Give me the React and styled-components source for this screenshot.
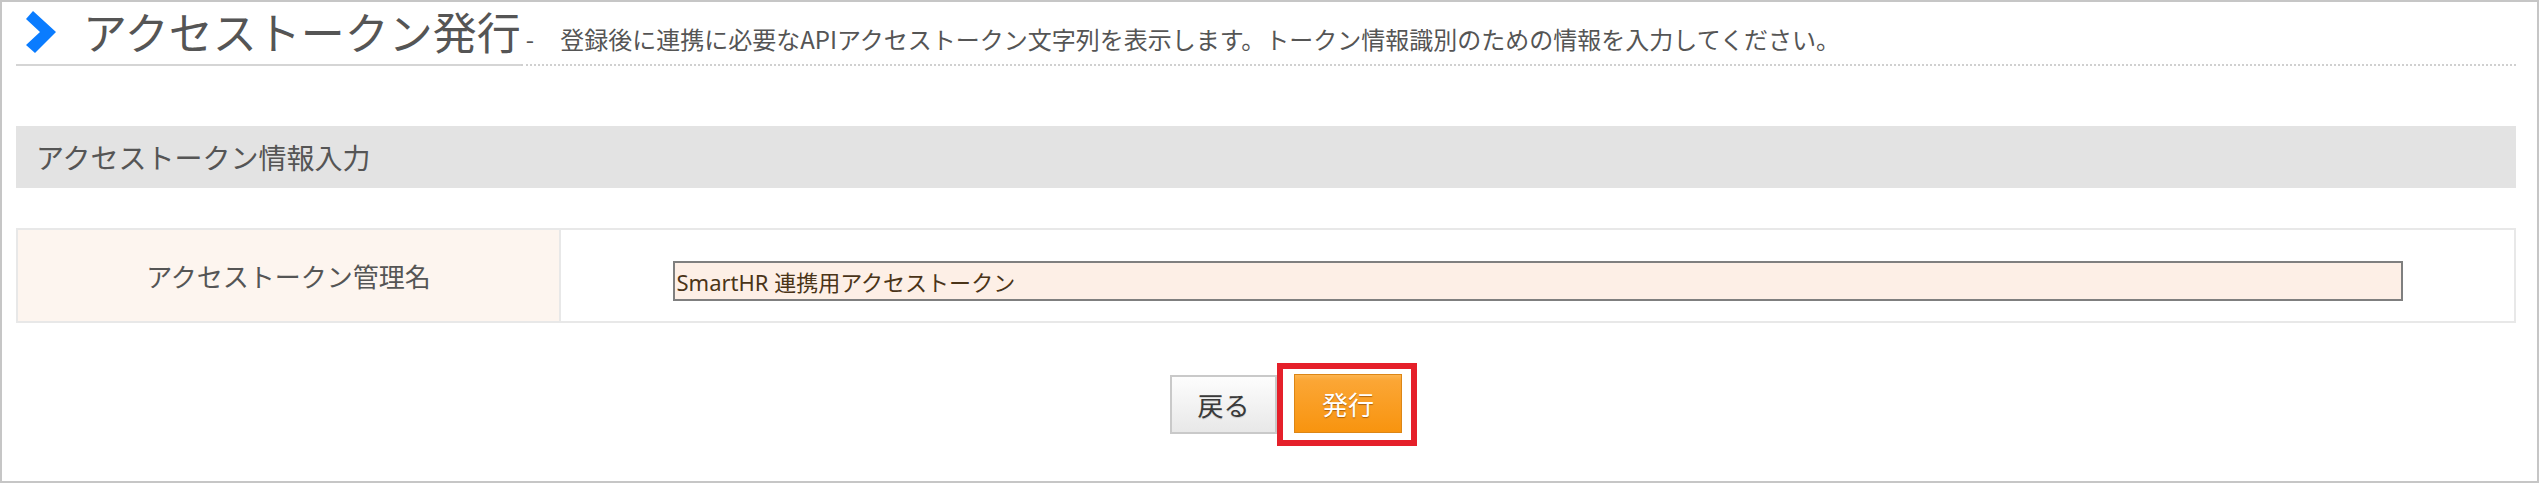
import React, { useState } from "react";
import styled, { createGlobalStyle } from "styled-components";

const GlobalStyle = createGlobalStyle`
  html, body {
    margin: 0;
    padding: 0;
    background: #fff;
  }
  body {
    font-family: "Noto Sans CJK JP", "Noto Sans", sans-serif;
  }
`;

const Page = styled.div`
  box-sizing: border-box;
  width: 2539px;
  height: 483px;
  border: 2px solid #c6c6c6;
  padding: 7px 21px 0 14px;
`;

const Heading = styled.div`
  display: flex;
  align-items: stretch;
`;

const Title = styled.h1`
  margin: 0;
  display: flex;
  align-items: center;
  gap: 27px;
  padding: 0 0 11px 10px;
  border-bottom: 2px solid #d5d5d5;
  font-size: 44px;
  line-height: 44px;
  font-weight: 400;
  color: #555;
  white-space: nowrap;
`;

const Chevron = styled.svg`
  width: 30px;
  height: 42px;
  flex: none;
  margin-top: 2px;
`;

const Lead = styled.p`
  flex: 1;
  margin: 0;
  display: flex;
  align-items: flex-end;
  padding: 0 0 13px 5px;
  border-bottom: 2px dotted #d0d0d0;
  font-size: 24px;
  line-height: 24px;
  color: #555;
  white-space: nowrap;
`;

const Dash = styled.span`
  margin-right: 26px;
`;

const SectionTitle = styled.h2`
  margin: 60px 0 0;
  height: 62px;
  display: flex;
  align-items: center;
  padding-left: 20px;
  background: #e3e3e3;
  font-size: 28px;
  font-weight: 400;
  color: #555;
`;

const FormTable = styled.div`
  margin-top: 40px;
  box-sizing: border-box;
  height: 95px;
  display: grid;
  grid-template-columns: 543px 1fr;
  border: 2px solid #e8e8e8;
`;

const LabelCell = styled.div`
  box-sizing: border-box;
  display: flex;
  align-items: center;
  justify-content: center;
  background: #fdf5ef;
  border-right: 2px solid #e8e8e8;
  font-size: 26px;
  color: #555;
`;

const ValueCell = styled.div`
  display: flex;
  align-items: center;
  justify-content: center;
  padding-top: 11px;
`;

const TextInput = styled.input`
  box-sizing: border-box;
  width: calc(100% - 223px);
  height: 40px;
  margin: 0;
  padding: 0 2px;
  border: 2px solid #7f7f7f;
  border-radius: 0;
  background: #fdefe6;
  font-family: "Noto Sans", "Noto Sans CJK JP", sans-serif;
  font-size: 22px;
  color: #4a3418;
  outline: none;
`;

const Actions = styled.div`
  margin-top: 40px;
  display: flex;
  justify-content: center;
  align-items: center;
  padding-left: 55px;
`;

const Highlight = styled.div`
  display: flex;
  border: 6px solid #e5202a;
  padding: 5px 9px 7px 11px;
`;

const Button = styled.button`
  box-sizing: border-box;
  height: 59px;
  margin: 0;
  padding: 0;
  font-family: "Noto Sans CJK JP", sans-serif;
  font-size: 26px;
  cursor: pointer;
  ${({ $primary }) =>
    $primary
      ? `
    width: 108px;
    border: 1px solid #dc8616;
    background: linear-gradient(#fdb44f 0%, #fba635 10%, #f8940f 100%);
    color: #fff;
    text-shadow: 0 1px 1px rgba(120, 60, 0, 0.6);
  `
      : `
    width: 107px;
    border: 2px solid #c9c9c9;
    background: linear-gradient(#fdfdfd, #e8e8e8);
    color: #3a3a3a;
    text-shadow: 0 1px 1px rgba(0, 0, 0, 0.15);
  `}
`;

const App = () => {
  const [name, setName] = useState("SmartHR 連携用アクセストークン");

  return (
    <Page>
      <GlobalStyle />
      <Heading>
        <Title>
          <Chevron viewBox="0 0 30 42">
            <polygon points="7,0 30,21 9,42 0,34 14,21 0,8" fill="#0a7cff" />
          </Chevron>
          アクセストークン発行
        </Title>
        <Lead>
          <Dash>-</Dash>
          登録後に連携に必要なAPIアクセストークン文字列を表示します。トークン情報識別のための情報を入力してください。
        </Lead>
      </Heading>

      <SectionTitle>アクセストークン情報入力</SectionTitle>

      <FormTable>
        <LabelCell>アクセストークン管理名</LabelCell>
        <ValueCell>
          <TextInput value={name} onChange={(e) => setName(e.target.value)} />
        </ValueCell>
      </FormTable>

      <Actions>
        <Button type="button">戻る</Button>
        <Highlight>
          <Button type="button" $primary>
            発行
          </Button>
        </Highlight>
      </Actions>
    </Page>
  );
};

export default App;
